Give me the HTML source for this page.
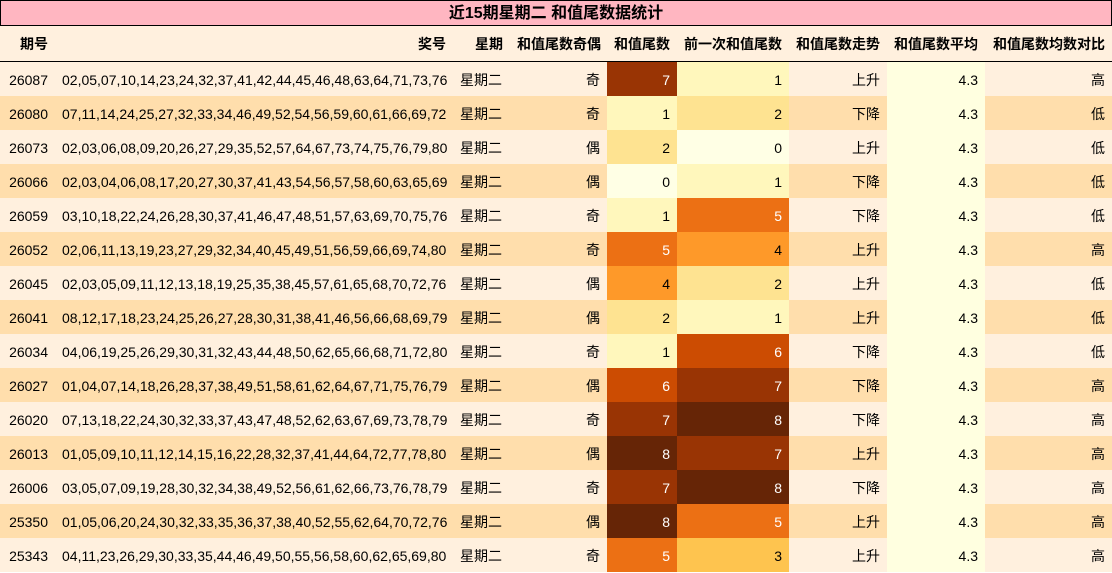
<!DOCTYPE html><html><head><meta charset="utf-8"><style>
body{margin:0;width:1112px;height:573px;overflow:hidden;background:#fff;font-family:"Liberation Sans","Noto Sans CJK SC",sans-serif;font-size:14px;color:#000}
.t{position:absolute;left:0;top:0;width:1110px;height:24px;background:#ffb6c1;border:1px solid #000;text-align:center;font-weight:bold;font-size:16px;line-height:26px}
table{position:absolute;left:0;top:26px;border-collapse:collapse;table-layout:fixed;width:1112px}
td,th{padding:0 7px;white-space:nowrap;overflow:hidden}
th{height:35px;background:#fff0de;text-align:right;border-bottom:1px solid #000;font-weight:bold}
td{height:34px;text-align:right;padding-top:2px;box-sizing:border-box}
tr.a td{background:#fff0de}tr.b td{background:#ffdeac}
td.l{text-align:left}
tr td.v{background:#ffffe0}
.c0{background:#ffffe5!important}.c1{background:#fff7bc!important}.c2{background:#fee391!important}.c3{background:#fec44f!important}.c4{background:#fe9929!important}.c5{background:#ec7014!important;color:#fff}.c6{background:#cc4c02!important;color:#fff}.c7{background:#993404!important;color:#fff}.c8{background:#662506!important;color:#fff}
</style></head><body>
<div class="t">近15期星期二 和值尾数据统计</div>
<table>
<colgroup><col style="width:55px"><col style="width:398px"><col style="width:57px"><col style="width:97px"><col style="width:70px"><col style="width:112px"><col style="width:98px"><col style="width:98px"><col style="width:127px"></colgroup>
<tr><th>期号</th><th>奖号</th><th>星期</th><th>和值尾数奇偶</th><th>和值尾数</th><th>前一次和值尾数</th><th>和值尾数走势</th><th>和值尾数平均</th><th>和值尾数均数对比</th></tr>
<tr class="a"><td>26087</td><td>02,05,07,10,14,23,24,32,37,41,42,44,45,46,48,63,64,71,73,76</td><td class="l">星期二</td><td>奇</td><td class="c7">7</td><td class="c1">1</td><td>上升</td><td class="v">4.3</td><td>高</td></tr>
<tr class="b"><td>26080</td><td>07,11,14,24,25,27,32,33,34,46,49,52,54,56,59,60,61,66,69,72</td><td class="l">星期二</td><td>奇</td><td class="c1">1</td><td class="c2">2</td><td>下降</td><td class="v">4.3</td><td>低</td></tr>
<tr class="a"><td>26073</td><td>02,03,06,08,09,20,26,27,29,35,52,57,64,67,73,74,75,76,79,80</td><td class="l">星期二</td><td>偶</td><td class="c2">2</td><td class="c0">0</td><td>上升</td><td class="v">4.3</td><td>低</td></tr>
<tr class="b"><td>26066</td><td>02,03,04,06,08,17,20,27,30,37,41,43,54,56,57,58,60,63,65,69</td><td class="l">星期二</td><td>偶</td><td class="c0">0</td><td class="c1">1</td><td>下降</td><td class="v">4.3</td><td>低</td></tr>
<tr class="a"><td>26059</td><td>03,10,18,22,24,26,28,30,37,41,46,47,48,51,57,63,69,70,75,76</td><td class="l">星期二</td><td>奇</td><td class="c1">1</td><td class="c5">5</td><td>下降</td><td class="v">4.3</td><td>低</td></tr>
<tr class="b"><td>26052</td><td>02,06,11,13,19,23,27,29,32,34,40,45,49,51,56,59,66,69,74,80</td><td class="l">星期二</td><td>奇</td><td class="c5">5</td><td class="c4">4</td><td>上升</td><td class="v">4.3</td><td>高</td></tr>
<tr class="a"><td>26045</td><td>02,03,05,09,11,12,13,18,19,25,35,38,45,57,61,65,68,70,72,76</td><td class="l">星期二</td><td>偶</td><td class="c4">4</td><td class="c2">2</td><td>上升</td><td class="v">4.3</td><td>低</td></tr>
<tr class="b"><td>26041</td><td>08,12,17,18,23,24,25,26,27,28,30,31,38,41,46,56,66,68,69,79</td><td class="l">星期二</td><td>偶</td><td class="c2">2</td><td class="c1">1</td><td>上升</td><td class="v">4.3</td><td>低</td></tr>
<tr class="a"><td>26034</td><td>04,06,19,25,26,29,30,31,32,43,44,48,50,62,65,66,68,71,72,80</td><td class="l">星期二</td><td>奇</td><td class="c1">1</td><td class="c6">6</td><td>下降</td><td class="v">4.3</td><td>低</td></tr>
<tr class="b"><td>26027</td><td>01,04,07,14,18,26,28,37,38,49,51,58,61,62,64,67,71,75,76,79</td><td class="l">星期二</td><td>偶</td><td class="c6">6</td><td class="c7">7</td><td>下降</td><td class="v">4.3</td><td>高</td></tr>
<tr class="a"><td>26020</td><td>07,13,18,22,24,30,32,33,37,43,47,48,52,62,63,67,69,73,78,79</td><td class="l">星期二</td><td>奇</td><td class="c7">7</td><td class="c8">8</td><td>下降</td><td class="v">4.3</td><td>高</td></tr>
<tr class="b"><td>26013</td><td>01,05,09,10,11,12,14,15,16,22,28,32,37,41,44,64,72,77,78,80</td><td class="l">星期二</td><td>偶</td><td class="c8">8</td><td class="c7">7</td><td>上升</td><td class="v">4.3</td><td>高</td></tr>
<tr class="a"><td>26006</td><td>03,05,07,09,19,28,30,32,34,38,49,52,56,61,62,66,73,76,78,79</td><td class="l">星期二</td><td>奇</td><td class="c7">7</td><td class="c8">8</td><td>下降</td><td class="v">4.3</td><td>高</td></tr>
<tr class="b"><td>25350</td><td>01,05,06,20,24,30,32,33,35,36,37,38,40,52,55,62,64,70,72,76</td><td class="l">星期二</td><td>偶</td><td class="c8">8</td><td class="c5">5</td><td>上升</td><td class="v">4.3</td><td>高</td></tr>
<tr class="a"><td>25343</td><td>04,11,23,26,29,30,33,35,44,46,49,50,55,56,58,60,62,65,69,80</td><td class="l">星期二</td><td>奇</td><td class="c5">5</td><td class="c3">3</td><td>上升</td><td class="v">4.3</td><td>高</td></tr>
</table>
</body></html>
